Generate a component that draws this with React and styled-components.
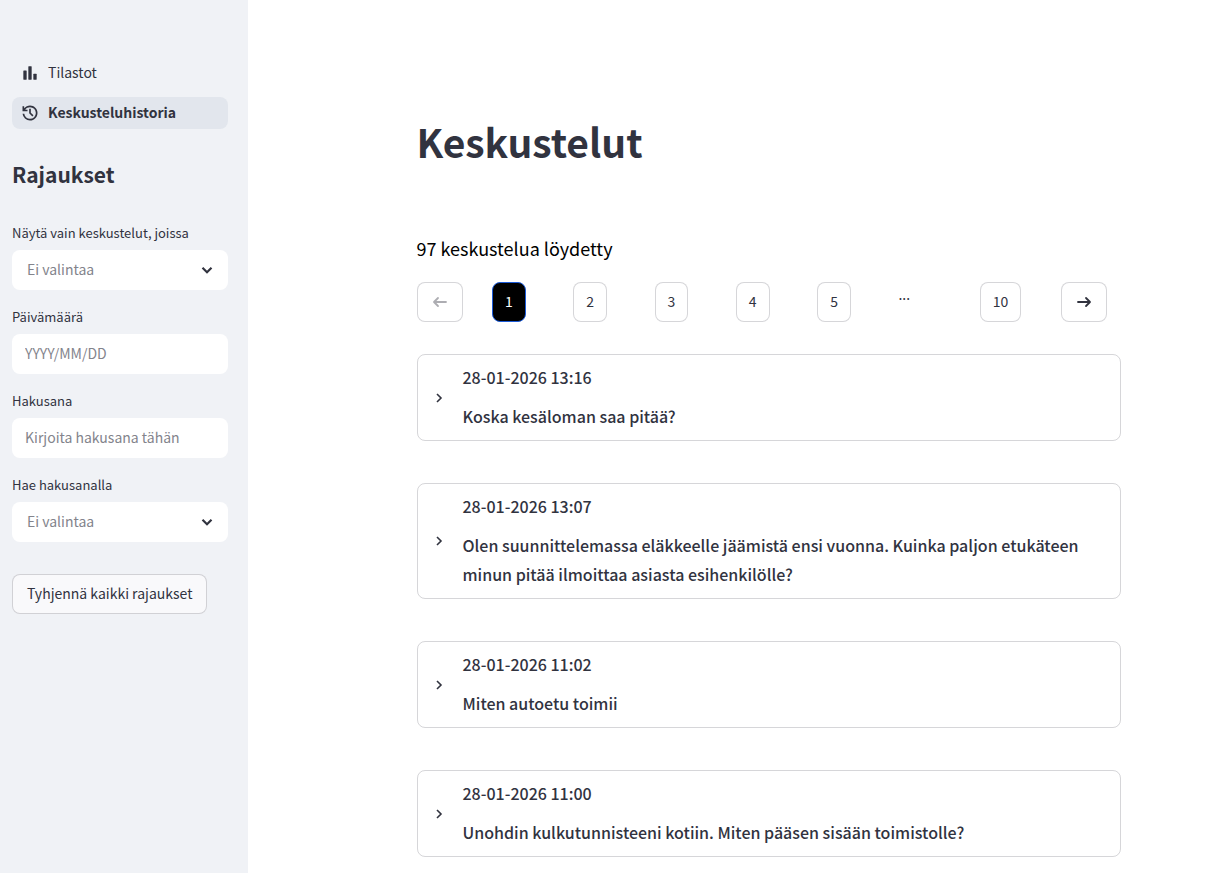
import React from 'react';
import styled, { createGlobalStyle, css } from 'styled-components';

const GlobalStyle = createGlobalStyle`
  * {
    box-sizing: border-box;
  }
  body {
    margin: 0;
    background: #fff;
    color: #31333f;
    font-family: 'Source Sans Pro', 'Noto Sans CJK SC', sans-serif;
    font-size: 14px;
    line-height: 24px;
  }
  button,
  input,
  select {
    font: inherit;
    color: inherit;
  }
`;

const Page = styled.div`
  display: flex;
  min-height: 100vh;
`;

const Sidebar = styled.aside`
  flex: 0 0 248px;
  padding: 57px 20px 24px 12px;
  background: #f0f2f6;
`;

const Nav = styled.nav`
  display: flex;
  flex-direction: column;
  gap: 8px;
`;

const NavLink = styled.a`
  display: flex;
  align-items: center;
  gap: 8px;
  height: 32px;
  padding: 0 8px;
  border-radius: 8px;
  color: #31333f;
  text-decoration: none;
  ${({ $active }) =>
    $active &&
    css`
      background: #e2e6ed;
      font-weight: 600;
    `}
  svg {
    width: 20px;
    height: 20px;
    fill: currentColor;
  }
  span {
    padding-bottom: 2px;
  }
`;

const FilterTitle = styled.h2`
  margin: 28px 0 31px;
  font-size: 21px;
  line-height: 34px;
  font-weight: 600;
`;

const Filters = styled.form`
  display: flex;
  flex-direction: column;
  align-items: flex-start;
  gap: 16px;
`;

const Field = styled.div`
  width: 100%;
  label {
    display: block;
    margin-bottom: 6px;
    font-size: 13px;
    line-height: 22px;
  }
`;

const control = css`
  display: block;
  width: 100%;
  height: 40px;
  border: 0;
  border-radius: 8px;
  background: #fff;
`;

const TextInput = styled.input`
  ${control}
  padding: 0 13px 2px;
  &::placeholder {
    color: #83848c;
    opacity: 1;
  }
`;

const SelectWrap = styled.div`
  position: relative;
  svg {
    position: absolute;
    top: 12px;
    right: 13px;
    pointer-events: none;
  }
`;

const Select = styled.select`
  ${control}
  padding: 0 36px 2px 15px;
  appearance: none;
  color: #83848c;
`;

const Button = styled.button`
  height: 40px;
  padding: 0 12px 2px;
  border: 1px solid rgba(49, 51, 63, 0.2);
  border-radius: 8px;
  background: #fff;
  cursor: pointer;
  &:disabled {
    color: rgba(49, 51, 63, 0.4);
    cursor: not-allowed;
  }
`;

const ClearButton = styled(Button)`
  margin-top: 16px;
  padding: 0 14px 2px;
  background: #f9f9fb;
`;

const PageButton = styled(Button)`
  ${({ $active }) =>
    $active &&
    css`
      border-color: #1c5bd8;
      background: #000;
      color: #fff;
    `}
`;

const ArrowButton = styled(Button)`
  padding: 0 12px;
  svg {
    display: block;
    width: 20px;
    height: 20px;
    fill: none;
    stroke: currentColor;
    stroke-width: 1.8;
    stroke-linecap: round;
    stroke-linejoin: round;
  }
`;

const Main = styled.main`
  flex: 1;
  min-width: 0;
  padding: 109px 0 16px 66px;
`;

const Content = styled.div`
  max-width: 704px;
  margin: 0 auto;
`;

const Title = styled.h1`
  margin: 0;
  font-size: 39px;
  line-height: 64px;
  font-weight: 700;
`;

const Count = styled.p`
  margin: 59px 0 18px;
  color: #000;
  font-size: 18px;
  line-height: 32px;
`;

const Pagination = styled.nav`
  display: grid;
  grid-template-columns: 1fr repeat(7, 1.1fr) 1fr;
  gap: 16px;
  justify-items: start;
  margin-bottom: 32px;
`;

const List = styled.div`
  display: flex;
  flex-direction: column;
  gap: 42px;
`;

const Card = styled.details`
  border: 1px solid rgba(49, 51, 63, 0.2);
  border-radius: 8px;
`;

const Summary = styled.summary`
  display: flex;
  align-items: center;
  gap: 16px;
  padding: 8px 16px 9px 13px;
  font-size: 16px;
  line-height: 29px;
  font-weight: 500;
  list-style: none;
  cursor: pointer;
  svg {
    flex: none;
    margin-top: 1px;
  }
  p {
    margin: 0;
  }
  p + p {
    margin-top: 10px;
  }
`;

const conversations = [
  { time: '28-01-2026 13:16', question: 'Koska kesäloman saa pitää?' },
  {
    time: '28-01-2026 13:07',
    question:
      'Olen suunnittelemassa eläkkeelle jäämistä ensi vuonna. Kuinka paljon etukäteen minun pitää ilmoittaa asiasta esihenkilölle?',
  },
  { time: '28-01-2026 11:02', question: 'Miten autoetu toimii' },
  {
    time: '28-01-2026 11:00',
    question: 'Unohdin kulkutunnisteeni kotiin. Miten pääsen sisään toimistolle?',
  },
];

function SelectField({ id, label }) {
  return (
    <Field>
      <label htmlFor={id}>{label}</label>
      <SelectWrap>
        <Select id={id} defaultValue="">
          <option value="">Ei valintaa</option>
        </Select>
        <svg width="16" height="16" viewBox="0 0 16 16" aria-hidden="true">
          <path d="M3.5 5.8 8 10.2l4.500-4.400" fill="none" stroke="#31333f" strokeWidth="2.200" />
        </svg>
      </SelectWrap>
    </Field>
  );
}

export default function App() {
  return (
    <>
      <GlobalStyle />
      <Page>
        <Sidebar>
          <Nav>
            <NavLink href="#tilastot">
              <svg viewBox="0 0 24 24" aria-hidden="true">
                <rect x="4" y="9" width="4" height="11" rx="0.500" />
                <rect x="10" y="4" width="4" height="16" rx="0.500" />
                <rect x="16" y="13" width="4" height="7" rx="0.500" />
              </svg>
              <span>Tilastot</span>
            </NavLink>
            <NavLink href="#keskusteluhistoria" $active>
              <svg viewBox="0 -960 960 960" aria-hidden="true">
                <path d="M480-120q-138 0-240.500-91.500T122-440h82q14 104 92.500 172T480-200q117 0 198.500-81.500T760-480q0-117-81.500-198.500T480-760q-69 0-129 32t-101 88h110v80H120v-240h80v94q51-64 124.500-99T480-840q75 0 140.500 28.500t114 77q48.500 48.500 77 114T840-480q0 75-28.500 140.500t-77 114q-48.500 48.500-114 77T480-120Zm112-192L440-464v-216h80v184l128 128-56 56Z" />
              </svg>
              <span>Keskusteluhistoria</span>
            </NavLink>
          </Nav>
          <FilterTitle>Rajaukset</FilterTitle>
          <Filters>
            <SelectField id="feedback" label="Näytä vain keskustelut, joissa" />
            <Field>
              <label htmlFor="date">Päivämäärä</label>
              <TextInput id="date" placeholder="YYYY/MM/DD" />
            </Field>
            <Field>
              <label htmlFor="keyword">Hakusana</label>
              <TextInput id="keyword" placeholder="Kirjoita hakusana tähän" />
            </Field>
            <SelectField id="scope" label="Hae hakusanalla" />
            <ClearButton type="reset">Tyhjennä kaikki rajaukset</ClearButton>
          </Filters>
        </Sidebar>
        <Main>
          <Content>
            <Title>Keskustelut</Title>
            <Count>97 keskustelua löydetty</Count>
            <Pagination>
              <ArrowButton type="button" disabled aria-label="Edellinen">
                <svg viewBox="0 0 20 20" aria-hidden="true">
                  <path d="M16 10H4.500M8 6l-4 4 4 4" />
                </svg>
              </ArrowButton>
              {[1, 2, 3, 4, 5].map((n) => (
                <PageButton key={n} type="button" $active={n === 1}>
                  {n}
                </PageButton>
              ))}
              <span>...</span>
              <PageButton type="button">10</PageButton>
              <ArrowButton type="button" aria-label="Seuraava">
                <svg viewBox="0 0 20 20" aria-hidden="true">
                  <path d="M4 10h11.500M12 6l4 4-4 4" />
                </svg>
              </ArrowButton>
            </Pagination>
            <List>
              {conversations.map(({ time, question }) => (
                <Card key={time}>
                  <Summary>
                    <svg width="16" height="16" viewBox="0 0 16 16" aria-hidden="true">
                      <path d="m6 4 4 4-4 4" fill="none" stroke="currentColor" strokeWidth="1.600" />
                    </svg>
                    <div>
                      <p>{time}</p>
                      <p>{question}</p>
                    </div>
                  </Summary>
                </Card>
              ))}
            </List>
          </Content>
        </Main>
      </Page>
    </>
  );
}
